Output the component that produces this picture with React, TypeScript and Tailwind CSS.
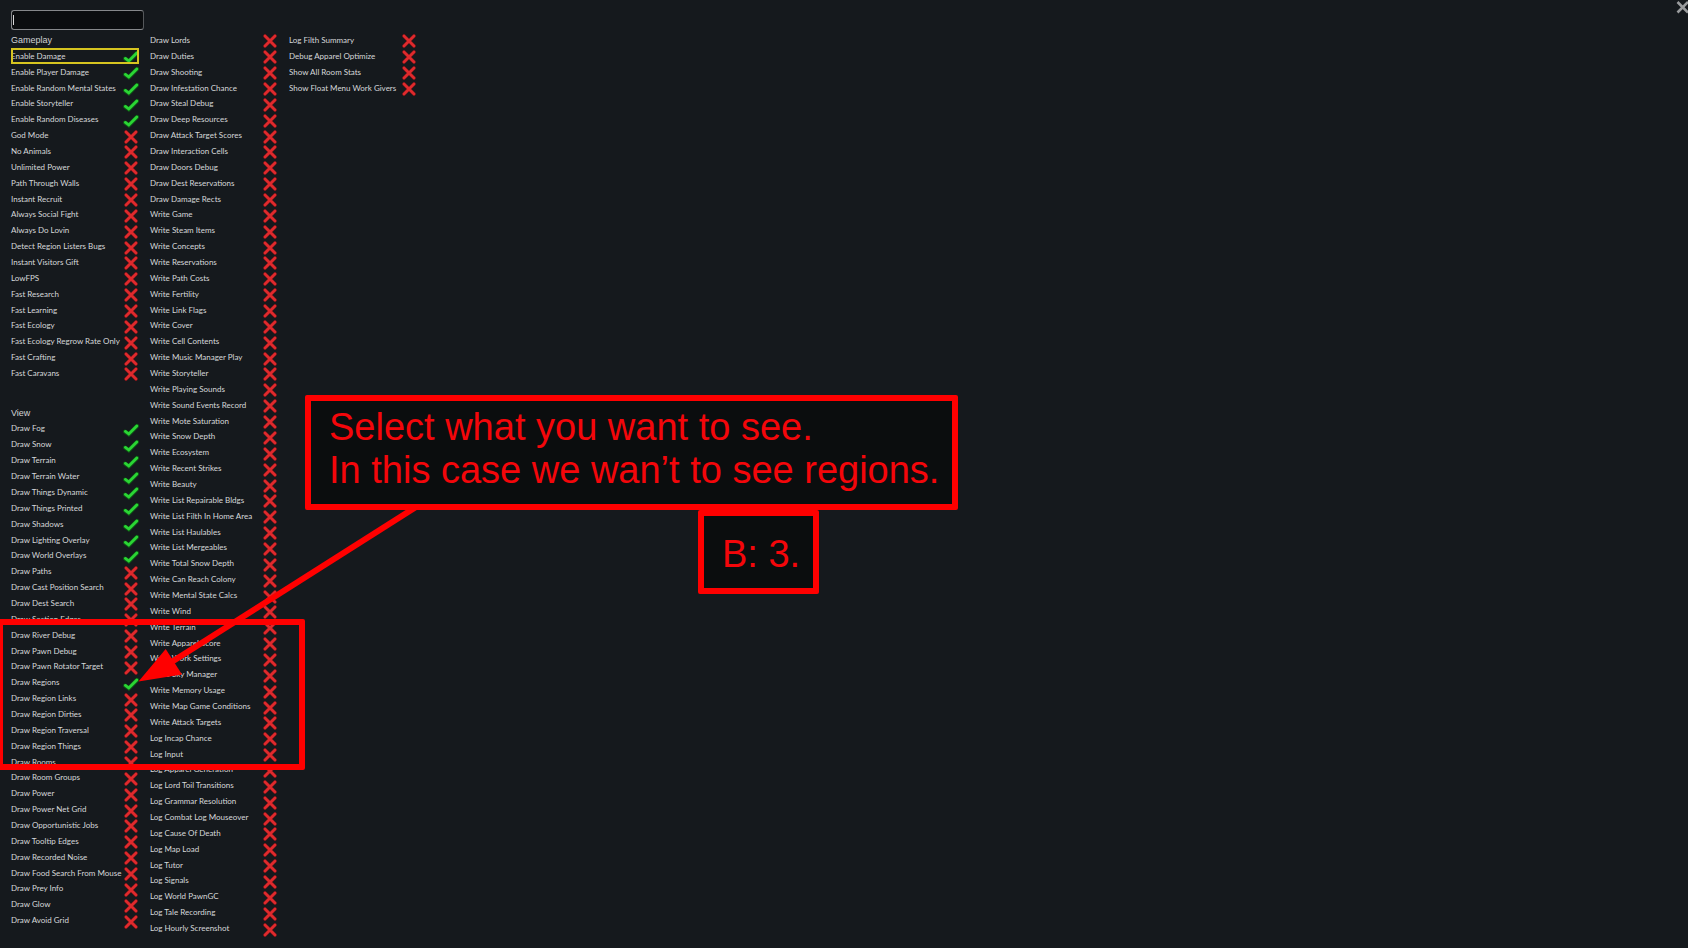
import { useState } from "react";

type Setting = { name: string; on?: boolean };

const off = (names: string[]): Setting[] => names.map((name) => ({ name }));
const on = (names: string[]): Setting[] => names.map((name) => ({ name, on: true }));

const gameplay: Setting[] = [
  ...on([
    "Enable Damage",
    "Enable Player Damage",
    "Enable Random Mental States",
    "Enable Storyteller",
    "Enable Random Diseases",
  ]),
  ...off([
    "God Mode",
    "No Animals",
    "Unlimited Power",
    "Path Through Walls",
    "Instant Recruit",
    "Always Social Fight",
    "Always Do Lovin",
    "Detect Region Listers Bugs",
    "Instant Visitors Gift",
    "LowFPS",
    "Fast Research",
    "Fast Learning",
    "Fast Ecology",
    "Fast Ecology Regrow Rate Only",
    "Fast Crafting",
    "Fast Caravans",
  ]),
];

const view: Setting[] = [
  ...on([
    "Draw Fog",
    "Draw Snow",
    "Draw Terrain",
    "Draw Terrain Water",
    "Draw Things Dynamic",
    "Draw Things Printed",
    "Draw Shadows",
    "Draw Lighting Overlay",
    "Draw World Overlays",
  ]),
  ...off([
    "Draw Paths",
    "Draw Cast Position Search",
    "Draw Dest Search",
    "Draw Section Edges",
    "Draw River Debug",
    "Draw Pawn Debug",
    "Draw Pawn Rotator Target",
  ]),
  ...on(["Draw Regions"]),
  ...off([
    "Draw Region Links",
    "Draw Region Dirties",
    "Draw Region Traversal",
    "Draw Region Things",
    "Draw Rooms",
    "Draw Room Groups",
    "Draw Power",
    "Draw Power Net Grid",
    "Draw Opportunistic Jobs",
    "Draw Tooltip Edges",
    "Draw Recorded Noise",
    "Draw Food Search From Mouse",
    "Draw Prey Info",
    "Draw Glow",
    "Draw Avoid Grid",
  ]),
];

const second: Setting[] = off([
  "Draw Lords",
  "Draw Duties",
  "Draw Shooting",
  "Draw Infestation Chance",
  "Draw Steal Debug",
  "Draw Deep Resources",
  "Draw Attack Target Scores",
  "Draw Interaction Cells",
  "Draw Doors Debug",
  "Draw Dest Reservations",
  "Draw Damage Rects",
  "Write Game",
  "Write Steam Items",
  "Write Concepts",
  "Write Reservations",
  "Write Path Costs",
  "Write Fertility",
  "Write Link Flags",
  "Write Cover",
  "Write Cell Contents",
  "Write Music Manager Play",
  "Write Storyteller",
  "Write Playing Sounds",
  "Write Sound Events Record",
  "Write Mote Saturation",
  "Write Snow Depth",
  "Write Ecosystem",
  "Write Recent Strikes",
  "Write Beauty",
  "Write List Repairable Bldgs",
  "Write List Filth In Home Area",
  "Write List Haulables",
  "Write List Mergeables",
  "Write Total Snow Depth",
  "Write Can Reach Colony",
  "Write Mental State Calcs",
  "Write Wind",
  "Write Terrain",
  "Write Apparel Score",
  "Write Work Settings",
  "Write Sky Manager",
  "Write Memory Usage",
  "Write Map Game Conditions",
  "Write Attack Targets",
  "Log Incap Chance",
  "Log Input",
  "Log Apparel Generation",
  "Log Lord Toil Transitions",
  "Log Grammar Resolution",
  "Log Combat Log Mouseover",
  "Log Cause Of Death",
  "Log Map Load",
  "Log Tutor",
  "Log Signals",
  "Log World PawnGC",
  "Log Tale Recording",
  "Log Hourly Screenshot",
]);

const third: Setting[] = off([
  "Log Filth Summary",
  "Debug Apparel Optimize",
  "Show All Room Stats",
  "Show Float Menu Work Givers",
]);

// Every column shares the same half-row tracks, so a section can start between two rows.
const columnClass = "grid w-32 shrink-0 grid-cols-[minmax(0,1fr)] grid-rows-[repeat(114,minmax(0,1fr))]";
const headingClass =
  "row-span-2 flex items-center font-['Liberation_Sans',sans-serif] text-[9px] leading-4 text-[#d0d2d4]";

function Row({ setting, highlighted }: { setting: Setting; highlighted?: boolean }) {
  const [checked, setChecked] = useState(Boolean(setting.on));
  return (
    <label
      className={
        "row-span-2 flex items-center justify-between whitespace-nowrap text-[8px] leading-4 text-[#d6d8da] " +
        (highlighted ? "outline-2 -outline-offset-2 outline-[#d6c420]" : "")
      }
    >
      <span className="min-w-0">{setting.name}</span>
      <span className="grid w-4 shrink-0 place-items-center pt-[3px]">
        <input
          type="checkbox"
          checked={checked}
          onChange={(e) => setChecked(e.target.checked)}
          className="col-start-1 row-start-1 size-3.5 appearance-none outline-none"
        />
        {checked ? (
          <svg viewBox="0 0 16 14" className="pointer-events-none col-start-1 row-start-1 h-3.5 w-4" fill="none" strokeLinecap="round">
            <path d="M2.2 8.6 L5.8 11.2 L14 3" stroke="#0d5a14" strokeWidth="4.2" />
            <path d="M2.4 8.4 L5.8 11 L13.8 3" stroke="#2bd535" strokeWidth="2.8" />
          </svg>
        ) : (
          <svg viewBox="0 0 14 14" className="pointer-events-none col-start-1 row-start-1 size-3.5" fill="none" strokeLinecap="round">
            <path d="M2 2 L12 12 M12 2 L2 12" stroke="#6d1518" strokeWidth="3.8" />
            <path d="M2 2 L12 12 M12 2 L2 12" stroke="#de2a2d" strokeWidth="2.6" />
          </svg>
        )}
      </span>
    </label>
  );
}

function Annotations() {
  return (
    <>
      <div className="absolute top-[619px] -left-[3px] h-[151px] w-[308px] rounded-xs border-6 border-[#ff0000]" />
      <svg className="pointer-events-none absolute top-[500px] left-[130px] h-[190px] w-[300px]" viewBox="130 500 300 190">
        <path d="M416 507 L170 663" stroke="#ff0000" strokeWidth="6" />
        <path d="M138.500 681.500 L165.700 649 L182 674.500 Z" fill="#ff0000" />
      </svg>
      <p className="absolute top-[395px] left-[305px] h-[115px] w-[653px] rounded-xs border-6 border-[#ff0000] bg-[#0b0d0e] pt-[5px] pl-[18px] text-[38px] leading-[43px] whitespace-nowrap text-[#f4060a]">
        Select what you want to see.
        <br />
        In this case we wan’t to see regions.
      </p>
      <p className="absolute top-[510px] left-[698px] h-[84px] w-[121px] rounded-xs border-6 border-[#ff0000] bg-[#0b0d0e] pt-[17px] pl-[18px] text-[38px] leading-[43px] whitespace-nowrap text-[#f4060a]">
        B: 3.
      </p>
    </>
  );
}

export default function App() {
  const [query, setQuery] = useState("");
  return (
    <main className="relative flex h-screen min-h-[900px] flex-col overflow-hidden bg-[#15191d] pb-3 pl-[11px] font-['Liberation_Sans',sans-serif]">
      <header className="flex h-8 shrink-0 items-start justify-between">
        <div className="relative mt-2.5">
          <input
            type="text"
            aria-label="Filter settings"
            value={query}
            onChange={(e) => setQuery(e.target.value)}
            className="block h-5 w-[133px] rounded-[3px] border border-[#85878a] border-r-[#55585b] bg-[#0b0d0f] px-1 text-[9px] text-white caret-transparent outline-none"
          />
          <span className="absolute top-[5px] left-0.5 h-2.5 w-px bg-[#d8d8d8]" />
        </div>
        <button type="button" aria-label="Close" className="-mr-px">
          <svg viewBox="0 0 14 14" className="size-3.5" fill="none" stroke="#999b9d" strokeWidth="2.6">
            <path d="M2.500 2 L13 12.500 M13 2 L2.500 12.500" />
          </svg>
        </button>
      </header>
      <div className="flex min-h-0 flex-1 gap-[11px] font-['Lato','Open_Sans',sans-serif]">
        <section className={columnClass}>
          <h2 className={headingClass}>Gameplay</h2>
          {gameplay.map((s, i) => (
            <Row key={s.name} setting={s} highlighted={i === 0} />
          ))}
          <div className="row-span-3" />
          <h2 className={headingClass}>View</h2>
          {view.map((s) => (
            <Row key={s.name} setting={s} />
          ))}
        </section>
        <section className={columnClass}>
          {second.map((s) => (
            <Row key={s.name} setting={s} />
          ))}
        </section>
        <section className={columnClass}>
          {third.map((s) => (
            <Row key={s.name} setting={s} />
          ))}
        </section>
      </div>
      <Annotations />
    </main>
  );
}
